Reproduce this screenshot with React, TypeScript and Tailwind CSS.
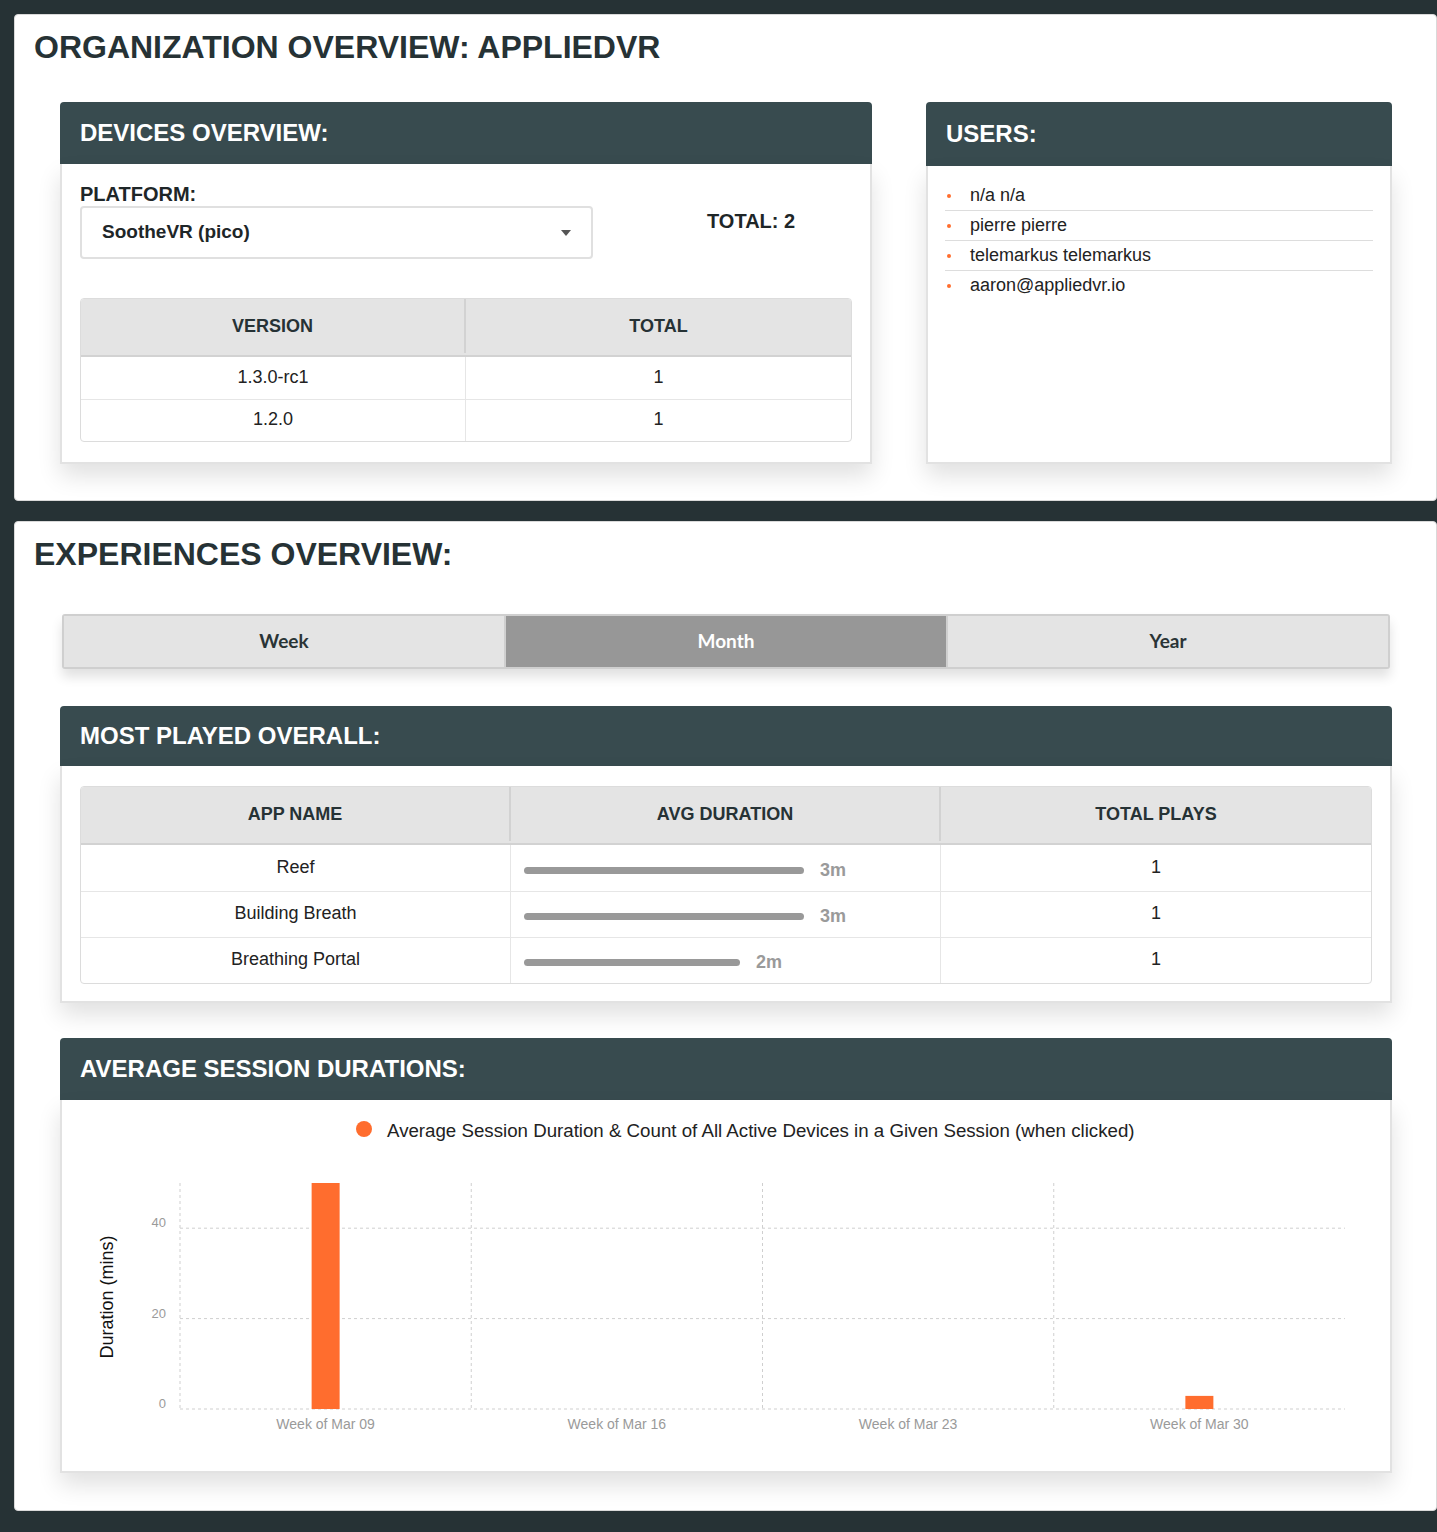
import React from "react";

const users = ["n/a n/a", "pierre pierre", "telemarkus telemarkus", "aaron@appliedvr.io"];

const versions = [
  { v: "1.3.0-rc1", t: "1" },
  { v: "1.2.0", t: "1" },
];

const apps = [
  { name: "Reef", bar: 280, label: "3m", plays: "1" },
  { name: "Building Breath", bar: 280, label: "3m", plays: "1" },
  { name: "Breathing Portal", bar: 216, label: "2m", plays: "1" },
];

function PanelHeader({ title, h = "h-[62px]" }: { title: string; h?: string }) {
  return (
    <div className={`${h} flex items-center rounded-t-[4px] bg-[#384b4f] px-[20px] text-[24px] font-bold text-white`}>
      {title}
    </div>
  );
}

function Chart() {
  const x0 = 118;
  const x1 = 1283;
  const yTop = 23;
  const y0 = 249;
  const perUnit = (y0 - yTop) / 50;
  const cat = (x1 - x0) / 4;
  const labels = ["Week of Mar 09", "Week of Mar 16", "Week of Mar 23", "Week of Mar 30"];
  const values = [50, 0, 0, 2.9];
  return (
    <svg width="1328" height="300" viewBox="0 0 1328 300" className="block">
      {[40, 20, 0].map((v) => {
        const y = y0 - v * perUnit;
        return (
          <g key={v}>
            <line x1={x0} x2={x1} y1={y} y2={y} stroke="#cfcfcf" strokeWidth="1" strokeDasharray="3 3" />
            <text x={104} y={y - 1} textAnchor="end" fontSize="13" fill="#9a9a9a" fontFamily="Liberation Sans, Arial, sans-serif">
              {v}
            </text>
          </g>
        );
      })}
      {[0, 1, 2, 3].map((i) => (
        <line key={i} x1={x0 + i * cat} x2={x0 + i * cat} y1={yTop} y2={y0} stroke="#cfcfcf" strokeWidth="1" strokeDasharray="3 3" />
      ))}
      {values.map((v, i) => {
        const cx = x0 + cat * i + cat / 2;
        const h = v * perUnit;
        return v > 0 ? <rect key={i} x={cx - 14} y={y0 - h} width="28" height={h} fill="#ff6d2e" /> : null;
      })}
      {labels.map((l, i) => (
        <text key={l} x={x0 + cat * i + cat / 2} y={269} textAnchor="middle" fontSize="14" fill="#9a9a9a" fontFamily="Liberation Sans, Arial, sans-serif">
          {l}
        </text>
      ))}
      <text
        x={0}
        y={0}
        transform="translate(51 137) rotate(-90)"
        textAnchor="middle"
        fontSize="18"
        fill="#111"
        fontFamily="Liberation Sans, Arial, sans-serif"
      >
        Duration (mins)
      </text>
    </svg>
  );
}

export default function App() {
  return (
    <div className="min-h-[1532px] bg-[#263235] pb-[22px] pl-[14px] pt-[14px] font-['Liberation_Sans',Arial,sans-serif] text-[#222]">
      {/* Organization card */}
      <section className="rounded-[4px] border border-[#d9d9d9] bg-white pb-[36px] pt-[14px]">
        <h1 className="px-[19px] text-[32px] font-bold leading-[37px] text-[#263235]">ORGANIZATION OVERVIEW: APPLIEDVR</h1>
        <div className="mt-[36px] flex items-stretch justify-between pl-[45px] pr-[44px]">
          {/* Devices */}
          <div className="flex w-[812px] flex-col">
            <PanelHeader title="DEVICES OVERVIEW:" />
            <div className="flex-1 border-2 border-t-0 border-[#e2e2e2] bg-white px-[18px] pb-[20px] pt-[18px] shadow-[0_12px_22px_rgba(0,0,0,0.12)]">
              <div className="flex">
                <div className="w-[513px]">
                  <div className="text-[20px] font-bold leading-[24px] text-[#1e2628]">PLATFORM:</div>
                  <div className="flex h-[53px] items-center justify-between rounded-[4px] border-2 border-[#e0e0e0] pl-[20px] pr-[20px]">
                    <span className="text-[19px] font-bold text-[#1e2628]">SootheVR (pico)</span>
                    <span className="h-0 w-0 border-l-[5px] border-r-[5px] border-t-[6px] border-l-transparent border-r-transparent border-t-[#555]" />
                  </div>
                </div>
                <div className="ml-[114px] mt-[27px] text-[20px] font-bold leading-[24px] text-[#1e2628]">TOTAL: 2</div>
              </div>
              <div className="mt-[39px] overflow-hidden rounded-[4px] border border-[#dcdcdc]">
                <div className="grid h-[58px] grid-cols-2 border-b-2 border-[#d2d2d2] bg-[#e4e4e4] pb-[2px] text-[18px] font-bold text-[#263235]">
                  <div className="flex items-center justify-center border-r-2 border-[#d2d2d2]">VERSION</div>
                  <div className="flex items-center justify-center">TOTAL</div>
                </div>
                {versions.map((r, i) => (
                  <div key={r.v} className={`grid h-[42px] grid-cols-2 text-[18px] ${i > 0 ? "border-t border-[#e6e6e6]" : ""}`}>
                    <div className="flex items-center justify-center border-r border-[#e6e6e6] pb-[2px]">{r.v}</div>
                    <div className="flex items-center justify-center pb-[2px]">{r.t}</div>
                  </div>
                ))}
              </div>
            </div>
          </div>
          {/* Users */}
          <div className="flex w-[466px] flex-col">
            <PanelHeader title="USERS:" h="h-[64px]" />
            <div className="flex-1 border-2 border-t-0 border-[#e2e2e2] bg-white px-[17px] pt-[15px] shadow-[0_12px_22px_rgba(0,0,0,0.12)]">
              <ul>
                {users.map((u, i) => (
                  <li
                    key={u}
                    className={`flex items-center py-[4px] text-[18px] leading-[21px] ${i < users.length - 1 ? "border-b border-[#dddddd]" : ""}`}
                  >
                    <span className="ml-[2px] h-[4px] w-[4px] rounded-full bg-[#ff6d2e]" />
                    <span className="ml-[19px]">{u}</span>
                  </li>
                ))}
              </ul>
            </div>
          </div>
        </div>
      </section>

      {/* Experiences card */}
      <section className="mt-[20px] rounded-[4px] border border-[#d9d9d9] bg-white pb-[37px] pt-[14px]">
        <h1 className="px-[19px] text-[32px] font-bold leading-[37px] text-[#263235]">EXPERIENCES OVERVIEW:</h1>
        <div className="pl-[45px] pr-[44px]">
          {/* Tabs */}
          <div className="mx-[2px] mt-[41px] flex h-[55px] gap-[2px] rounded-[3px] border-2 border-[#cfcfcf] bg-[#cfcfcf] font-['Lato',sans-serif] text-[19px] font-bold shadow-[0_8px_12px_rgba(0,0,0,0.12)]">
            <div className="flex flex-1 items-center justify-center bg-[#e4e4e4] text-[#2a3436]">Week</div>
            <div className="flex flex-1 items-center justify-center bg-[#979797] text-white">Month</div>
            <div className="flex flex-1 items-center justify-center bg-[#e4e4e4] text-[#2a3436]">Year</div>
          </div>

          {/* Most played */}
          <div className="mt-[37px]">
            <PanelHeader title="MOST PLAYED OVERALL:" h="h-[60px]" />
            <div className="border-2 border-t-0 border-[#e2e2e2] bg-white px-[18px] pb-[17px] pt-[20px] shadow-[0_12px_22px_rgba(0,0,0,0.12)]">
              <div className="overflow-hidden rounded-[4px] border border-[#dcdcdc]">
                <div className="grid h-[58px] grid-cols-3 border-b-2 border-[#d2d2d2] bg-[#e4e4e4] pb-[2px] text-[18px] font-bold text-[#263235]">
                  <div className="flex items-center justify-center border-r-2 border-[#d2d2d2]">APP NAME</div>
                  <div className="flex items-center justify-center border-r-2 border-[#d2d2d2]">AVG DURATION</div>
                  <div className="flex items-center justify-center">TOTAL PLAYS</div>
                </div>
                {apps.map((a, i) => (
                  <div key={a.name} className={`grid h-[46px] grid-cols-3 text-[18px] ${i > 0 ? "border-t border-[#e6e6e6]" : ""}`}>
                    <div className="flex items-center justify-center border-r border-[#e6e6e6] pb-[2px]">{a.name}</div>
                    <div className="flex items-center border-r border-[#e6e6e6] pl-[13px] pt-[4px]">
                      <span className="h-[7px] rounded-full bg-[#999]" style={{ width: a.bar }} />
                      <span className="ml-[16px] text-[18px] font-bold text-[#9a9a9a]">{a.label}</span>
                    </div>
                    <div className="flex items-center justify-center pb-[2px]">{a.plays}</div>
                  </div>
                ))}
              </div>
            </div>
          </div>

          {/* Average session durations */}
          <div className="mt-[35px]">
            <PanelHeader title="AVERAGE SESSION DURATIONS:" />
            <div className="border-2 border-t-0 border-[#e2e2e2] bg-white pb-[11px] pt-[19px] shadow-[0_12px_22px_rgba(0,0,0,0.12)]">
              <div className="flex items-center pl-[294px] text-[18.7px] leading-[24px] text-[#222]">
                <span className="mb-[5px] h-[16px] w-[16px] rounded-full bg-[#ff6d2e]" />
                <span className="ml-[15px]">Average Session Duration &amp; Count of All Active Devices in a Given Session (when clicked)</span>
              </div>
              <div className="mt-[17px]">
                <Chart />
              </div>
            </div>
          </div>
        </div>
      </section>
    </div>
  );
}
